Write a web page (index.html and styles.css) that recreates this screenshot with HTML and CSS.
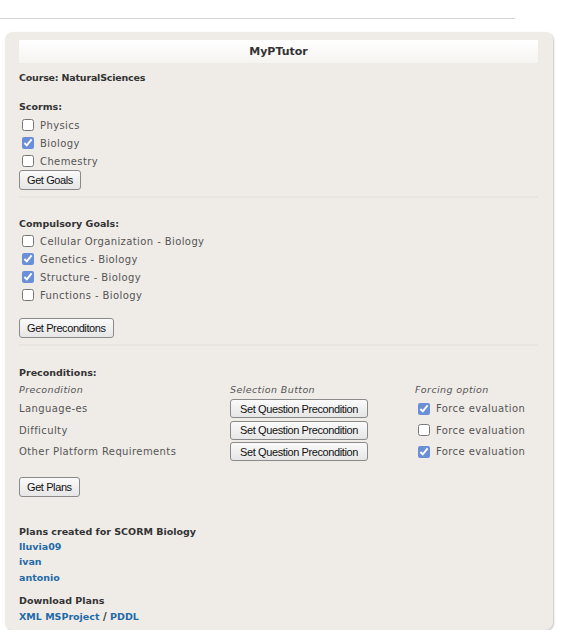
FILE: index.html
```html
<!DOCTYPE html>
<html lang="en">
<head>
    <meta charset="UTF-8">
    <title>MyPTutor</title>
    <link rel="stylesheet" href="styles.css">
</head>
<body>
    <div class="topbar"></div>

    <div class="panel">
        <div class="title">MyPTutor</div>

        <p class="label course">Course: NaturalSciences</p>

        <div class="section scorms">
            <p class="label">Scorms:</p>
            <label class="check"><input type="checkbox"> Physics</label>
            <label class="check"><input type="checkbox" checked> Biology</label>
            <label class="check"><input type="checkbox"> Chemestry</label>
            <button class="btn">Get Goals</button>
        </div>

        <hr>

        <div class="section goals">
            <p class="label">Compulsory Goals:</p>
            <label class="check"><input type="checkbox"> Cellular Organization - Biology</label>
            <label class="check"><input type="checkbox" checked> Genetics - Biology</label>
            <label class="check"><input type="checkbox" checked> Structure - Biology</label>
            <label class="check"><input type="checkbox"> Functions - Biology</label>
            <button class="btn btn-gap">Get Preconditons</button>
        </div>

        <hr>

        <div class="section prec">
            <p class="label">Preconditions:</p>
            <div class="precs">
                <span class="head">Precondition</span>
                <span class="head">Selection Button</span>
                <span class="head">Forcing option</span>

                <span>Language-es</span>
                <button class="btn">Set Question Precondition</button>
                <label class="check"><input type="checkbox" checked> Force evaluation</label>

                <span>Difficulty</span>
                <button class="btn">Set Question Precondition</button>
                <label class="check"><input type="checkbox"> Force evaluation</label>

                <span>Other Platform Requirements</span>
                <button class="btn">Set Question Precondition</button>
                <label class="check"><input type="checkbox" checked> Force evaluation</label>
            </div>
            <button class="btn btn-gap">Get Plans</button>
        </div>

        <div class="plans">
            <p class="label">Plans created for SCORM Biology</p>
            <a href="#">lluvia09</a>
            <a href="#">ivan</a>
            <a href="#">antonio</a>
        </div>

        <div class="download">
            <p class="label">Download Plans</p>
            <p class="links"><a href="#">XML MSProject</a> / <a href="#">PDDL</a></p>
        </div>
    </div>
</body>
</html>
```

FILE: styles.css
```css
body {
    margin: 0;
    background: #fff;
    font-family: "DejaVu Sans", Verdana, sans-serif;
    font-size: 10px;
    color: #555;
}
.topbar {
    width: 515px;
    height: 18px;
    border-bottom: 1px solid #d4d4d4;
}
.panel {
    margin: 13px 10px 0 5px;
    width: 534px;
    height: 590px;
    padding: 8px 0 0 14px;
    background: #efece8;
    border-radius: 8px;
    box-shadow: 1px 1px 2px #c8c8c8;
}
.title {
    width: 519px;
    height: 23px;
    line-height: 23px;
    text-align: center;
    font-weight: bold;
    font-size: 11px;
    color: #333;
    background: linear-gradient(#ffffff, #f6f4f1);
}
p {
    margin: 0;
}
.label {
    font-weight: bold;
    color: #333;
    font-size: 9.5px;
    line-height: 14px;
}
.course {
    margin-top: 8px;
    letter-spacing: -0.2px;
}
.scorms {
    margin-top: 15px;
}
.scorms .label {
    margin-bottom: 2px;
}
.goals {
    margin-top: 19px;
}
.goals .label {
    margin-bottom: 1px;
}
.prec {
    margin-top: 20px;
}
.prec > .label {
    margin-bottom: 3px;
}
.check {
    display: flex;
    align-items: center;
    height: 18px;
    letter-spacing: 0.4px;
}
.check input {
    margin: 0 6px 0 3px;
    width: 12px;
    height: 12px;
    accent-color: #6b8fd6;
}
.btn {
    font-family: "Liberation Sans", Arial, sans-serif;
    font-size: 11px;
    letter-spacing: -0.4px;
    color: #111;
    height: 20px;
    padding: 0 7px;
    border: 1px solid #8a8a8a;
    border-radius: 3px;
    background: linear-gradient(#fafafa, #e6e6e6);
    margin-top: 0;
}
.btn-gap {
    margin-top: 14px;
}
hr {
    width: 519px;
    margin: 6px 0 0 0;
    border: none;
    border-top: 2px solid #e8e5e0;
}
.precs {
    display: grid;
    grid-template-columns: 211px 185px 1fr;
    grid-template-rows: 15px;
    grid-auto-rows: 21.5px;
    align-items: center;
    letter-spacing: 0.4px;
}
.precs .head {
    font-style: italic;
    font-size: 9.5px;
    line-height: 14px;
    align-self: start;
}
.precs .btn {
    width: 138px;
    height: 19px;
    padding: 0;
    margin: 0;
}
.plans {
    margin-top: 28px;
}
.plans a, .links a {
    display: block;
    font-weight: bold;
    font-size: 9.5px;
    line-height: 15.5px;
    color: #1f6aa8;
    text-decoration: none;
}
.download {
    margin-top: 9px;
}
.links {
    font-weight: bold;
    color: #333;
    line-height: 18px;
}
.links a {
    display: inline;
}
```
